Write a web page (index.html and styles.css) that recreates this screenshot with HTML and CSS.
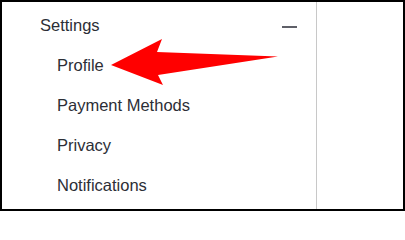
FILE: index.html
```html
<!DOCTYPE html>
<html>
<head>
<meta charset="utf-8">
<link rel="stylesheet" href="styles.css">
</head>
<body>
<div class="frame">
  <nav class="sidebar">
    <div class="group-head">
      <span class="group-title">Settings</span>
      <span class="minus"></span>
    </div>
    <ul class="items">
      <li>Profile</li>
      <li>Payment Methods</li>
      <li>Privacy</li>
      <li>Notifications</li>
    </ul>
  </nav>
  <main class="pane"></main>
  <svg class="arrow" width="405" height="211" viewBox="0 0 405 211">
    <polygon fill="#ff0000" points="109,63 160,37 155,50 276,54.5 156,73 161,83"/>
  </svg>
</div>
</body>
</html>
```
FILE: styles.css
```css
html, body {
  margin: 0;
  padding: 0;
  background: #ffffff;
}
.frame {
  position: relative;
  box-sizing: border-box;
  width: 405px;
  height: 211px;
  border: 2px solid #000000;
  display: flex;
  overflow: hidden;
  font-family: "Liberation Sans", Arial, sans-serif;
  font-size: 16.5px;
  color: #2c2e36;
}
.sidebar {
  box-sizing: border-box;
  width: 315px;
  border-right: 1px solid #c8c8c8;
  padding-top: 3px;
}
.group-head {
  display: flex;
  justify-content: space-between;
  height: 40px;
  line-height: 40px;
  padding-left: 38px;
  padding-right: 19px;
}
.minus {
  width: 15px;
  height: 2px;
  margin-top: 21px;
  background: #5f6068;
}
.items {
  list-style: none;
  margin: 0;
  padding: 0 0 0 55px;
}
.items li {
  height: 40px;
  line-height: 40px;
}
.pane {
  flex: 1;
}
.arrow {
  position: absolute;
  left: 0;
  top: 0;
  pointer-events: none;
}
```
